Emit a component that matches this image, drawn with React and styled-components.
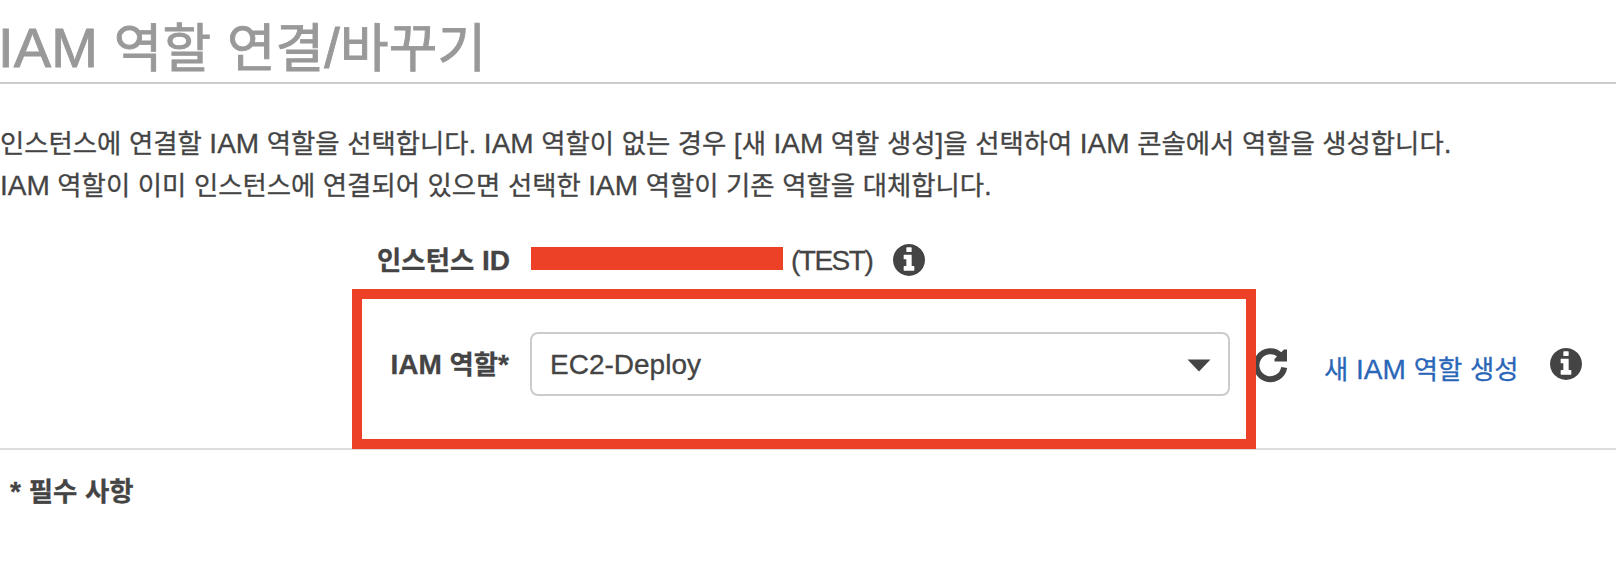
import React from "react";
import styled, { createGlobalStyle } from "styled-components";

const GlobalStyle = createGlobalStyle`
  body {
    margin: 0;
    background: #fff;
    color: #444;
    font: 28px/42px "Liberation Sans", "Noto Sans CJK KR", sans-serif;
    -webkit-text-stroke: 0.3px currentColor;
    overflow: hidden;
  }
`;

const Hangul = styled.span`
  font-family: "Noto Sans CJK KR", sans-serif;
  font-size: 0.943em;
  line-height: 0;
`;

/* Sets Hangul runs slightly smaller so they balance with the Latin text. */
const Text = ({ children }) =>
  children
    .split(/([가-힣]+)/)
    .map((run, i) => (i % 2 ? <Hangul key={i}>{run}</Hangul> : run));

const Page = styled.main`
  width: 1616px;
  height: 566px;
`;

const Title = styled.h1`
  margin: 0;
  height: 82px;
  border-bottom: 2px solid #ccc;
  color: #999;
  font-size: 56px;
  font-weight: 400;
  line-height: 96px;
  text-indent: -2px;
  letter-spacing: 0.15px;
  -webkit-text-stroke-width: 0.9px;
  white-space: nowrap;
`;

const Intro = styled.p`
  margin: 0;
  padding-top: 39px;
  height: 84px;
  word-spacing: -0.22px;
  white-space: nowrap;
`;

const Form = styled.section`
  padding-top: 33px;
  height: 208px;
  border-bottom: 2px solid #ddd;
`;

const Row = styled.div`
  display: flex;
  align-items: center;
  height: 40px;
  white-space: nowrap;
`;

const Label = styled.div`
  width: ${(p) => p.$width}px;
  margin-right: ${(p) => p.$gap}px;
  padding-top: 1px;
  text-align: right;
  font-weight: 700;
`;

const Redacted = styled.span`
  width: 252px;
  height: 23px;
  margin: 0 8px 3px 0;
  background: #ec4027;
`;

const InstanceName = styled.span`
  width: 102px;
  padding-top: 1px;
  letter-spacing: -1.5px;
`;

const Highlight = styled.div`
  display: flex;
  align-items: center;
  box-sizing: border-box;
  width: 904px;
  height: 160px;
  margin-left: 352px;
  border: 10px solid #ec4027;
  padding: 0 0 10px;
  flex: none;
`;

const RoleRow = styled.div`
  display: flex;
  margin-top: 9px;
  white-space: nowrap;
`;

const Select = styled.div`
  display: flex;
  align-items: center;
  justify-content: space-between;
  box-sizing: border-box;
  width: 700px;
  height: 64px;
  padding: 2px 17px 0 18px;
  border: 2px solid #ccc;
  border-radius: 8px;
`;

const Actions = styled.div`
  display: flex;
  align-items: flex-start;
  padding-top: 59px;
`;

const Link = styled.a`
  width: 226px;
  margin-left: 36px;
  padding-top: 1px;
  color: #2a66b8;
`;

const Required = styled.p`
  margin: 0;
  padding: 21px 0 0 10px;
  font-weight: 700;
`;

const Icon = styled.svg`
  display: block;
  flex: none;
`;

const InfoIcon = () => (
  <Icon width="32" height="32" viewBox="0 0 1536 1536" fill="#444">
    <path d="M1024 1248v-160q0-14-9-23t-23-9h-96V544q0-14-9-23t-23-9H544q-14 0-23 9t-9 23v160q0 14 9 23t23 9h96v320h-96q-14 0-23 9t-9 23v160q0 14 9 23t23 9h448q14 0 23-9t9-23zM896 352V192q0-14-9-23t-23-9H672q-14 0-23 9t-9 23v160q0 14 9 23t23 9h192q14 0 23-9t9-23zM1536 768q0 209-103 385.500T1153.500 1433T768 1536T382.500 1433T103 1153.500T0 768T103 382.500T382.500 103T768 0T1153.500 103T1433 382.500T1536 768z" />
  </Icon>
);

const RefreshIcon = () => (
  <Icon width="32" height="36" viewBox="0 0 32 36">
    <path d="M28.200 19.500A14 14 0 1 1 24.500 7.500" fill="none" stroke="#444" strokeWidth="6" />
    <path d="M31 1.500V13.500H18.500V11L28 1.500z" fill="#444" />
  </Icon>
);

const Caret = () => (
  <Icon width="24" height="13" viewBox="0 0 24 13">
    <path d="M0.500 0.500h23L12 12.500z" fill="#444" />
  </Icon>
);

export default function App() {
  return (
    <Page>
      <GlobalStyle />
      <Title>
        <Text>IAM 역할 연결/바꾸기</Text>
      </Title>
      <Intro>
        <Text>인스턴스에 연결할 IAM 역할을 선택합니다. IAM 역할이 없는 경우 [새 IAM 역할 생성]을 선택하여 IAM 콘솔에서 역할을 생성합니다.</Text>
        <br />
        <Text>IAM 역할이 이미 인스턴스에 연결되어 있으면 선택한 IAM 역할이 기존 역할을 대체합니다.</Text>
      </Intro>
      <Form>
        <Row>
          <Label $width={510} $gap={21}>
            <Text>인스턴스 ID</Text>
          </Label>
          <Redacted />
          <InstanceName>(TEST)</InstanceName>
          <InfoIcon />
        </Row>
        <RoleRow>
          <Highlight>
            <Label $width={147} $gap={21}>
              <Text>IAM 역할*</Text>
            </Label>
            <Select>
              EC2-Deploy
              <Caret />
            </Select>
          </Highlight>
          <Actions>
            <RefreshIcon />
            <Link>
              <Text>새 IAM 역할 생성</Text>
            </Link>
            <InfoIcon />
          </Actions>
        </RoleRow>
      </Form>
      <Required>
        <Text>* 필수 사항</Text>
      </Required>
    </Page>
  );
}
